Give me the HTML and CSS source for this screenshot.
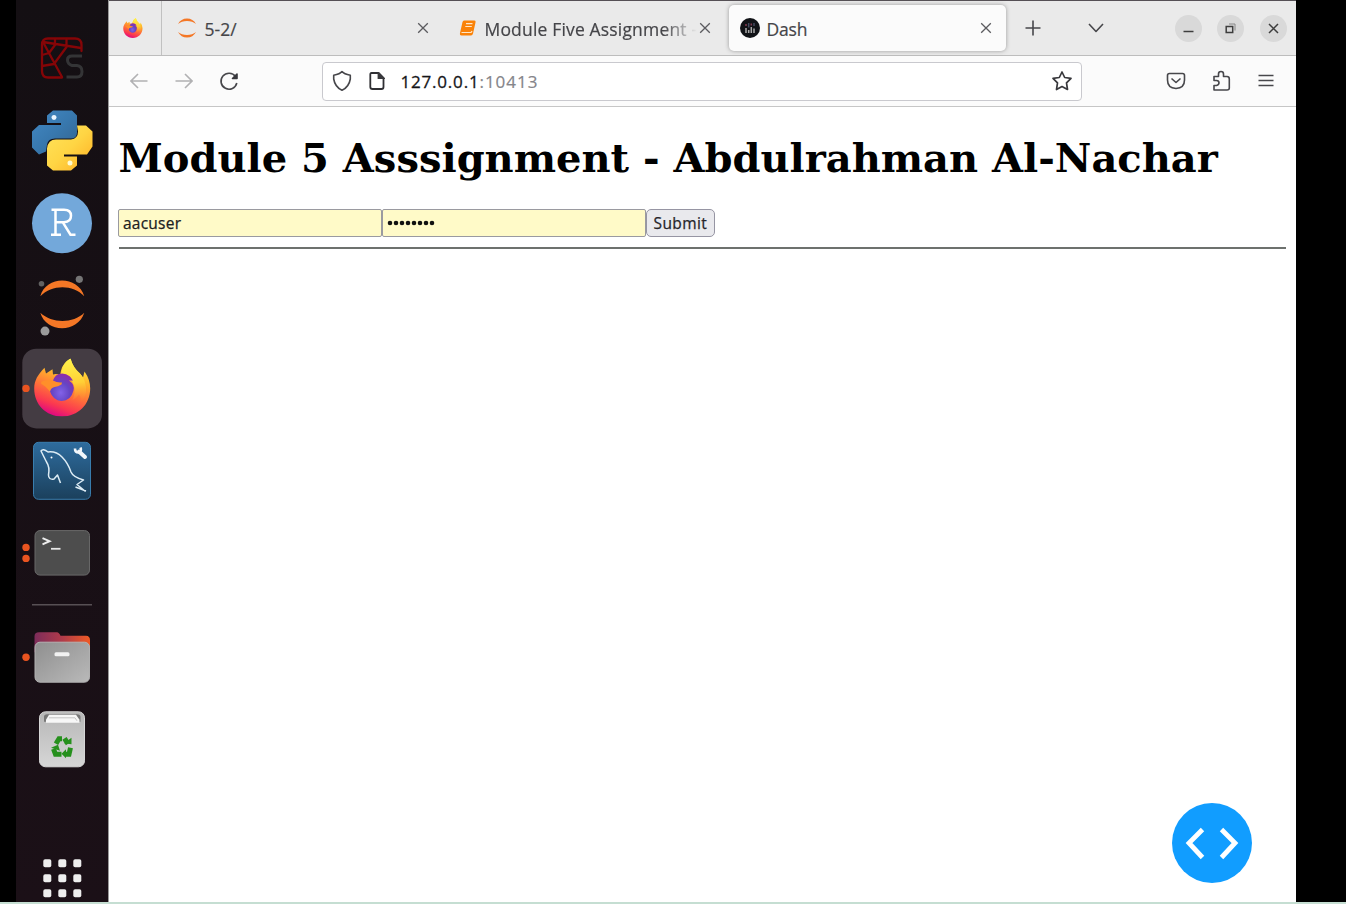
FILE: index.html
```html
<!DOCTYPE html>
<html lang="en">
<head>
<meta charset="utf-8">
<title>Dash</title>
<link rel="stylesheet" href="styles.css">
</head>
<body>
<svg class="defs" width="0" height="0">
  <defs>
    <linearGradient id="pyBlue" x1="0" y1="0" x2="1" y2="1"><stop offset="0" stop-color="#4389c4"/><stop offset=".5" stop-color="#3878ae"/><stop offset="1" stop-color="#34638c"/></linearGradient>
    <linearGradient id="pyYellow" x1="0" y1="0" x2="1" y2="1"><stop offset="0" stop-color="#ffe45c"/><stop offset=".5" stop-color="#ffd544"/><stop offset="1" stop-color="#ffae22"/></linearGradient>
    <linearGradient id="fxBody" x1=".75" y1=".05" x2=".4" y2="1"><stop offset="0" stop-color="#fff044"/><stop offset=".3" stop-color="#ffb32b"/><stop offset=".58" stop-color="#ff7139"/><stop offset=".82" stop-color="#fb3850"/><stop offset="1" stop-color="#e00a80"/></linearGradient>
    <linearGradient id="fxFlame" x1=".5" y1="0" x2=".6" y2="1"><stop offset="0" stop-color="#fff24a"/><stop offset=".55" stop-color="#ffd036"/><stop offset="1" stop-color="#ff8b30" stop-opacity="0"/></linearGradient>
    <radialGradient id="fxCore" cx=".45" cy=".7" r=".75"><stop offset="0" stop-color="#8262e8"/><stop offset=".5" stop-color="#6545c4"/><stop offset="1" stop-color="#9626a6"/></radialGradient>
    <linearGradient id="sql" x1="0" y1="0" x2="0" y2="1"><stop offset="0" stop-color="#2e6c9e"/><stop offset="1" stop-color="#1b405c"/></linearGradient>
    <linearGradient id="folderBack"><stop offset="0" stop-color="#7c2c5a"/><stop offset=".5" stop-color="#b03b4a"/><stop offset="1" stop-color="#ef5a25"/></linearGradient>
    <linearGradient id="folderFront" x1="0" y1="0" x2="1" y2="1"><stop offset="0" stop-color="#8f8f8f"/><stop offset="1" stop-color="#b9b9b9"/></linearGradient>
    <linearGradient id="bin" x1="0" y1="0" x2="0" y2="1"><stop offset="0" stop-color="#b7b7b7"/><stop offset="1" stop-color="#d6d6d6"/></linearGradient>
    <symbol id="firefox" viewBox="34 358 57 58">
      <path d="M90.200 388C90.200 404 78 416 62 416S34.200 404 34.200 388C34.200 380 38 374 44.500 367.300L46 373L52.500 368.800L53 374Q57 373 60 375L61 370Q63 362 70.500 358Q73 368 80 373L83 377L84.500 371Q90.200 379 90.200 388Z" fill="url(#fxBody)"/>
      <path d="M61 374Q62 363 70.500 358Q73 367 80 373Q85 378 86 387Q87 397 80 403Q82 397 79 394Q76 398 72 400Q76 393 74 385Q72 378 66 376Q63 374 61 374Z" fill="url(#fxFlame)"/>
      <path d="M56 375Q63 371 70 376L73 380L69 380Q75 384 73.500 390Q71 400.500 61.500 400.500Q53 400 50 391Q52 379 56 375Z" fill="url(#fxCore)"/>
      <path d="M41.500 381Q49 378.500 53 380Q57 382.500 62 382L61.500 384Q58 386 54.500 386.500Q50.500 387.500 50 391Q46 386 41 383Z" fill="#ff8f2a"/>
    </symbol>
  </defs>
</svg>
<div class="screen">
  <nav class="dock">
    <svg class="app" viewBox="16 17 92 82.400"><g fill="none" stroke="#850507" stroke-width="2.300" stroke-linejoin="round" stroke-linecap="round"><path d="M62 77.500H48Q42 77.500 42 71V45Q42 38.500 48 38.500H75Q81.500 38.500 81.500 45V51"/><path d="M43 42L81 48M43 42L62 77M66.500 39V47L54 64L42 66M55 39V45L49 53L42 55"/></g><path d="M82 56H72Q67.500 56 67.500 60T72 65.500H77Q82 66 82 71.500T77 77H66.500" fill="none" stroke="#343436" stroke-width="3"/></svg>
    <svg class="app" viewBox="16 99.400 92 82.400"><path d="M53 111H72L77 116V133Q77 139 71 139H55Q48 139 47 145L46 152L39 155L32 148V132L39 125.500H61V123.500H47V116Z" fill="url(#pyBlue)"/><path d="M77 126H86L92.500 132V147L87 155H64V157H77V166L71 171H53L47 166V149Q48 140 56 140H71Q78 139 78 132Z" fill="url(#pyYellow)"/><circle cx="54" cy="118" r="2.500" fill="#e8f5ff"/><circle cx="70" cy="163.500" r="2.500" fill="#fffbd0"/></svg>
    <svg class="app" viewBox="16 181.800 92 82.400"><circle cx="62" cy="223" r="30" fill="#73a8da"/><path d="M51.500 209.500H64Q71 209.500 71 215.500T64 222H55.500M55.500 210V234.500M51 234.500H61M63 222.500L70.500 234.500H75.500" fill="none" stroke="#fff" stroke-width="2.500"/></svg>
    <svg class="app" viewBox="16 264.200 92 82.400"><path d="M40.300 296.500C46 275.500 78 275.500 84.300 296.500C73 284.500 52 284.500 40.300 296.500ZM40.300 313C46 333.500 78 333.500 84.300 313C73 324 52 324 40.300 313Z" fill="#f47726"/><circle cx="41.500" cy="284" r="2.800" fill="#616161"/><circle cx="79.300" cy="279.500" r="3.600" fill="#757575"/><circle cx="45" cy="331.300" r="4.500" fill="#9b9b9b"/></svg>
    <svg class="app" viewBox="16 346.600 92 82.400"><rect x="22.300" y="348.300" width="79.700" height="79.700" rx="14" fill="#443c43"/><circle cx="26" cy="388" r="3.700" fill="#e95420"/><use href="#firefox" x="34" y="358" width="57" height="58"/></svg>
    <svg class="app" viewBox="16 429 92 82.400"><rect x="33.500" y="442.300" width="57" height="57" rx="5" fill="url(#sql)" stroke="#397eaf"/><path d="M60.500 483L57.500 475L54 479Q48.500 480 48.500 475Q50 467 46.500 462L41 451Q43 448 48 452Q56 451 62 457Q68 463 71 472Q73 477 83.500 480L77 484.500L85.500 491.500M75.500 487L86 491" fill="none" stroke="#dcecf5" stroke-width="1.500" stroke-linejoin="round"/><circle cx="51.500" cy="457.500" r="1" fill="#fff"/><path d="M79 451.500L85 457" stroke="#f2f7fb" stroke-width="4" stroke-linecap="round"/><path d="M75 448.500Q75 452.500 78.500 452.500Q82 451 80.500 447.500" fill="none" stroke="#f2f7fb" stroke-width="2.600"/></svg>
    <svg class="app" viewBox="16 511.400 92 82.400"><circle cx="26" cy="547.800" r="3.700" fill="#e95420"/><circle cx="26" cy="558.800" r="3.700" fill="#e95420"/><rect x="35" y="531" width="54.500" height="44.500" rx="5" fill="#4d4d4d" stroke="#696969"/><path d="M42.500 538.500L49.500 541.600L42.500 544.700" fill="none" stroke="#ededed" stroke-width="2"/><path d="M51 549.200H60.500" stroke="#e8e8e8" stroke-width="1.800"/></svg>
    <div class="divider"></div>
    <svg class="app" viewBox="16 615.800 92 82.400"><circle cx="26" cy="657" r="3.700" fill="#e95420"/><path d="M34.500 652V636Q34.500 632 39 632H57Q59 632 60.500 635.500H86Q90 635.500 90 640V652Z" fill="url(#folderBack)"/><rect x="35" y="642" width="54.500" height="40" rx="5" fill="url(#folderFront)" stroke="#b3b3b3"/><rect x="54.500" y="652" width="15" height="4" rx="1.500" fill="#f2f2f2"/></svg>
    <svg class="app" viewBox="16 698.200 92 82.400"><rect x="39.500" y="712" width="45" height="55" rx="6" fill="url(#bin)" stroke="#d8d8d8"/><path d="M44 722V717Q44 714.500 47 714.500H77Q80.500 714.500 80.500 717V722Z" fill="#777"/><path d="M46 723V720L49 715H76L79.500 720V723Z" fill="#f7f7f7"/><path d="M49 718H75L77 721" stroke="#c4c4c4" fill="none"/><g fill="none" stroke="#26901d" stroke-width="5"><path d="M56 744L59 739H62M64.500 738.500L68 744M70.500 748L69 754.500H65.500M61.500 754.500H55.500L53.500 749"/></g><path d="M64 743.500L71.500 744.500L71.500 738ZM66 749.500V758.500L61.500 754ZM51 748L58 745L60 751Z" fill="#26901d"/></svg>
    <svg class="launcher" viewBox="16 837 92 65"><g fill="#eee"><rect x="43.300" y="859.300" width="8" height="8" rx="1.800"/><rect x="58.300" y="859.300" width="8" height="8" rx="1.800"/><rect x="73.300" y="859.300" width="8" height="8" rx="1.800"/><rect x="43.300" y="874.300" width="8" height="8" rx="1.800"/><rect x="58.300" y="874.300" width="8" height="8" rx="1.800"/><rect x="73.300" y="874.300" width="8" height="8" rx="1.800"/><rect x="43.300" y="889.300" width="8" height="8" rx="1.800"/><rect x="58.300" y="889.300" width="8" height="8" rx="1.800"/><rect x="73.300" y="889.300" width="8" height="8" rx="1.800"/></g></svg>
  </nav>
  <div class="browser">
    <header class="tabs">
      <div class="tab pinned"><svg width="20" height="20"><use href="#firefox" width="20" height="20"/></svg></div>
      <div class="tab jupyter"><svg width="20" height="20" viewBox="0 0 20 20"><path d="M1 6Q4 .5 10 .5T19 6Q15.500 3 10 3T1 6ZM1 14Q4.500 17 10 17T19 14Q16 19.500 10 19.500T1 14Z" fill="#f47726"/></svg><span class="label">5-2/</span><svg class="close" viewBox="0 0 12 12"><path d="M1.200 1.200L10.800 10.800M10.800 1.200L1.200 10.800"/></svg></div>
      <div class="tab module"><svg width="18" height="18" viewBox="0 0 18 18"><path d="M5 1.500H15.500Q17 1.500 16.500 3.500L14 14.500Q13.500 16.500 12 16.500H2.500Q.500 16.500 1 14L3.500 3Q4 1.500 5 1.500Z" fill="#fa8208"/><path d="M7 4.700H13.500M6.300 7.500H12.800M2.500 13.500H11.500Q12.500 13.500 13 12" stroke="#ffe6c8" stroke-width="1.200" fill="none"/></svg><span class="label faded">Module Five Assignment -</span><svg class="close" viewBox="0 0 12 12"><path d="M1.200 1.200L10.800 10.800M10.800 1.200L1.200 10.800"/></svg></div>
      <div class="tab active"><svg width="20" height="20" viewBox="0 0 20 20"><circle cx="10" cy="10" r="10" fill="#111317"/><path d="M6 10V15M8.700 12V15M11.300 9V15M14 10.500V15" stroke="#aaa" stroke-width="1.500"/><path d="M6 6V8M11.300 5.500V7.500" stroke="#813a50" stroke-width="1.500"/><path d="M8.700 5V9.500M14 5V8" stroke="#444b60" stroke-width="1.500"/></svg><span class="label">Dash</span><svg class="close" viewBox="0 0 12 12"><path d="M1.200 1.200L10.800 10.800M10.800 1.200L1.200 10.800"/></svg></div>
      <svg class="add line" width="16" height="16"><path d="M8 .500V15.500M.500 8H15.500"/></svg>
      <svg class="more line" width="18" height="12"><path d="M2 2L9 9.500L16 2"/></svg>
      <div class="window-buttons">
        <svg width="27" height="27"><circle cx="13.500" cy="13.500" r="13.500"/><path d="M8.500 16.500H18.500"/></svg>
        <svg width="27" height="27"><circle cx="13.500" cy="13.500" r="13.500"/><path d="M9.200 11.500H15.700V17.500H9.200Z"/><path class="thin" d="M12 9H18V15.500"/></svg>
        <svg width="27" height="27"><circle cx="13.500" cy="13.500" r="13.500"/><path d="M9 9L18 18M18 9L9 18"/></svg>
      </div>
    </header>
    <div class="toolbar">
      <svg class="history back" width="18" height="16"><path d="M17.500 8H1M8 1L1 8L8 15"/></svg>
      <svg class="history" width="18" height="16"><path d="M.500 8H17M10 1L17 8L10 15"/></svg>
      <svg class="reload line" width="20" height="20"><path d="M16.500 5.500A8 8 0 1 0 17.800 12"/><path d="M18 3V7.500H13.500Z" class="solid"/></svg>
      <div class="address">
        <svg class="line" width="20" height="22"><path d="M10 1.500Q12 4 18.300 5.300V9Q17 17 10 20.300Q3 17 1.700 9V5.300Q8 4 10 1.500Z"/></svg>
        <svg class="page-icon" width="16" height="18"><path d="M2.500 1H9.500L14.500 6V15Q14.500 17 12.500 17H3.500Q1.300 17 1.300 15V2.500Q1.300 1 2.500 1Z"/><path d="M9.500 1V6H14.500Z" class="solid"/></svg>
        <span class="url"><b>127.0.0.1</b>:10413</span>
        <svg class="star" width="22" height="22" viewBox="0 0 22 22"><path d="M11 2L13.700 7.500L20 8.300L15.500 12.800L16.500 19.500L11 16.500L5.500 19.500L6.500 12.800L2 8.300L8.300 7.500Z"/></svg>
      </div>
      <svg class="pocket tool" width="20" height="18"><path d="M3.500 1.500H16.500Q18.500 1.500 18.500 3.500V8Q18.500 16 10 16.500Q1.500 16 1.500 8V3.500Q1.500 1.500 3.500 1.500Z"/><path d="M5.500 6.500L10 10.500L14.500 6.500"/></svg>
      <svg class="puzzle tool" width="19" height="22"><path d="M2 6.500H6.500V4Q6.500 1.500 9 1.500T11.500 4V6.500H15Q17.300 6.500 17.300 9V18Q17.300 20 15 20H2V15.500H4.500Q7 15 7 12.800T4.500 10.500H2Z"/></svg>
      <svg class="menu tool" width="16" height="14"><path d="M.500 1.500H15.500M.500 6.500H15.500M.500 11.500H15.500"/></svg>
    </div>
    <main class="page">
      <h1>Module 5 Asssignment - Abdulrahman Al-Nachar</h1>
      <div class="login"><div class="field">aacuser</div><div class="field dots"><svg width="49" height="6"><path d="M3 3H47.500" /></svg></div><button>Submit</button></div>
      <hr>
      <div class="debug"><svg width="80" height="80"><path d="M30.500 26.500L17 40L30.500 54.500M49.500 26.500L63 40L49.500 54.500"/></svg></div>
    </main>
  </div>
</div>
</body>
</html>
```
FILE: styles.css
```css
* { box-sizing: border-box; }
body { margin: 0; background: #000; font-family: "Open Sans", "Noto Sans", sans-serif; overflow: hidden; }
svg { display: block; flex: none; }
.defs { position: absolute; }
.screen { height: 904px; padding: 0 50px 0 16px; display: flex; border-bottom: 2px solid #c5ded2; }
.dock { width: 92px; height: 902px; padding-top: 17px; background: linear-gradient(#140f13, #1b1017); display: flex; flex-direction: column; }
.app { width: 92px; height: 82.4px; overflow: visible; }
.divider { height: 22px; flex: none; margin: 0 16px; background: linear-gradient(#575054, #575054) 0 10px / 100% 1.5px no-repeat; }
.launcher { width: 92px; height: 65px; margin-top: auto; }
.browser { width: 1188px; height: 902px; display: flex; flex-direction: column; background: #fff; border-left: 1px solid #999; }
.tabs { height: 56px; flex: none; display: flex; align-items: center; background: #eaeaea; border-top: 1px solid #555055; border-bottom: 1.5px solid #bdbdbd; color: #454549; }
.tab { height: 100%; display: flex; align-items: center; font-size: 17.5px; white-space: nowrap; }
.pinned { width: 53px; padding-left: 14px; border-right: 1px solid #c1c1c1; }
.jupyter { width: 284px; padding: 0 17px 0 15px; }
.label { margin-left: 7.5px; line-height: 24px; padding-top: 1px; -webkit-text-stroke: .2px; }
.close { width: 12px; height: 12px; margin-left: auto; fill: none; stroke: #5b5b5f; stroke-width: 1.3; }
.module { width: 282.5px; padding: 0 17.5px 0 12.5px; }
.faded { width: 212px; margin-left: 8px; overflow: hidden; letter-spacing: .17px; mask-image: linear-gradient(90deg, #000 84%, transparent 100%); }
.active { width: 277.5px; height: 46px; padding: 0 14px 0 11px; background: #fbfbfb; border-radius: 5px; box-shadow: 0 0 4px #999; }
.active .label { margin-left: 7px; letter-spacing: -.2px; }
.line, .tool { fill: none; stroke: #47474b; stroke-width: 1.6; stroke-linejoin: round; }
.add { margin-left: 19px; }
.more { margin-left: 46px; }
.window-buttons { margin: 0 9.5px 0 auto; display: flex; gap: 15.5px; }
.window-buttons circle { fill: #d9d9d9; }
.window-buttons path { fill: none; stroke: #3d3d3d; stroke-width: 1.5; }
.window-buttons .thin { stroke: #888; stroke-width: 1; }
.toolbar { height: 51px; flex: none; display: flex; align-items: center; background: #fbfbfb; border-bottom: 1px solid #c6c6c6; }
.history { fill: none; stroke: #b1b1b3; stroke-width: 1.6; margin-right: 27px; }
.back { margin-left: 20.5px; }
.reload { margin-left: -1px; }
.solid { fill: #38383c; stroke: #38383c; }
.address { width: 760px; height: 39px; margin-left: 83.5px; padding: 0 8px 0 9px; display: flex; align-items: center; background: #fff; border: 1px solid #c9c9ce; border-radius: 4px; }
.page-icon { margin-left: 17px; fill: none; stroke: #303034; stroke-width: 1.8; }
.url { margin-left: 15.5px; font-size: 17px; letter-spacing: 1px; color: #85858a; -webkit-text-stroke: .2px; }
.url b { font-weight: 500; letter-spacing: .8px; color: #151519; -webkit-text-stroke: .3px #151519; }
.star { margin-left: auto; fill: none; stroke: #39393d; stroke-width: 1.7; stroke-linejoin: round; }
.pocket { margin-left: 84px; }
.puzzle { margin-left: 26px; }
.menu { margin-left: 27px; }
.page { flex: 1; padding: 0 10px 0 9.5px; display: flex; flex-direction: column; }
h1 { margin: 26px 0 0; font: bold 40px/50px "DejaVu Serif", serif; color: #000; white-space: nowrap; }
.login { display: flex; height: 28px; margin: 26px 0 0 -.6px; }
.field { width: 264px; padding: 0 4px; line-height: 26px; background: #fffac8; border: 1.5px solid #9a9aa0; border-radius: 2px; font-size: 15.5px; letter-spacing: .25px; color: #202020; -webkit-text-stroke: .25px; display: flex; align-items: center; }
.dots path { fill: none; stroke: #111; stroke-width: 4.6; stroke-linecap: round; stroke-dasharray: 0 6; }
button { width: 69px; padding: 0; font: 15.5px "Open Sans", sans-serif; letter-spacing: .4px; color: #25252a; -webkit-text-stroke: .25px; background: #e9e9ed; border: 1.5px solid #9695a3; border-radius: 5px; }
hr { width: 100%; height: 2px; margin: 10px 0 0; border: 0; background: #6d716e; }
.debug { width: 80px; height: 80px; margin: auto 34px 19px auto; background: #119dff; border-radius: 50%; }
.debug path { fill: none; stroke: #fff; stroke-width: 4.8; }
```
